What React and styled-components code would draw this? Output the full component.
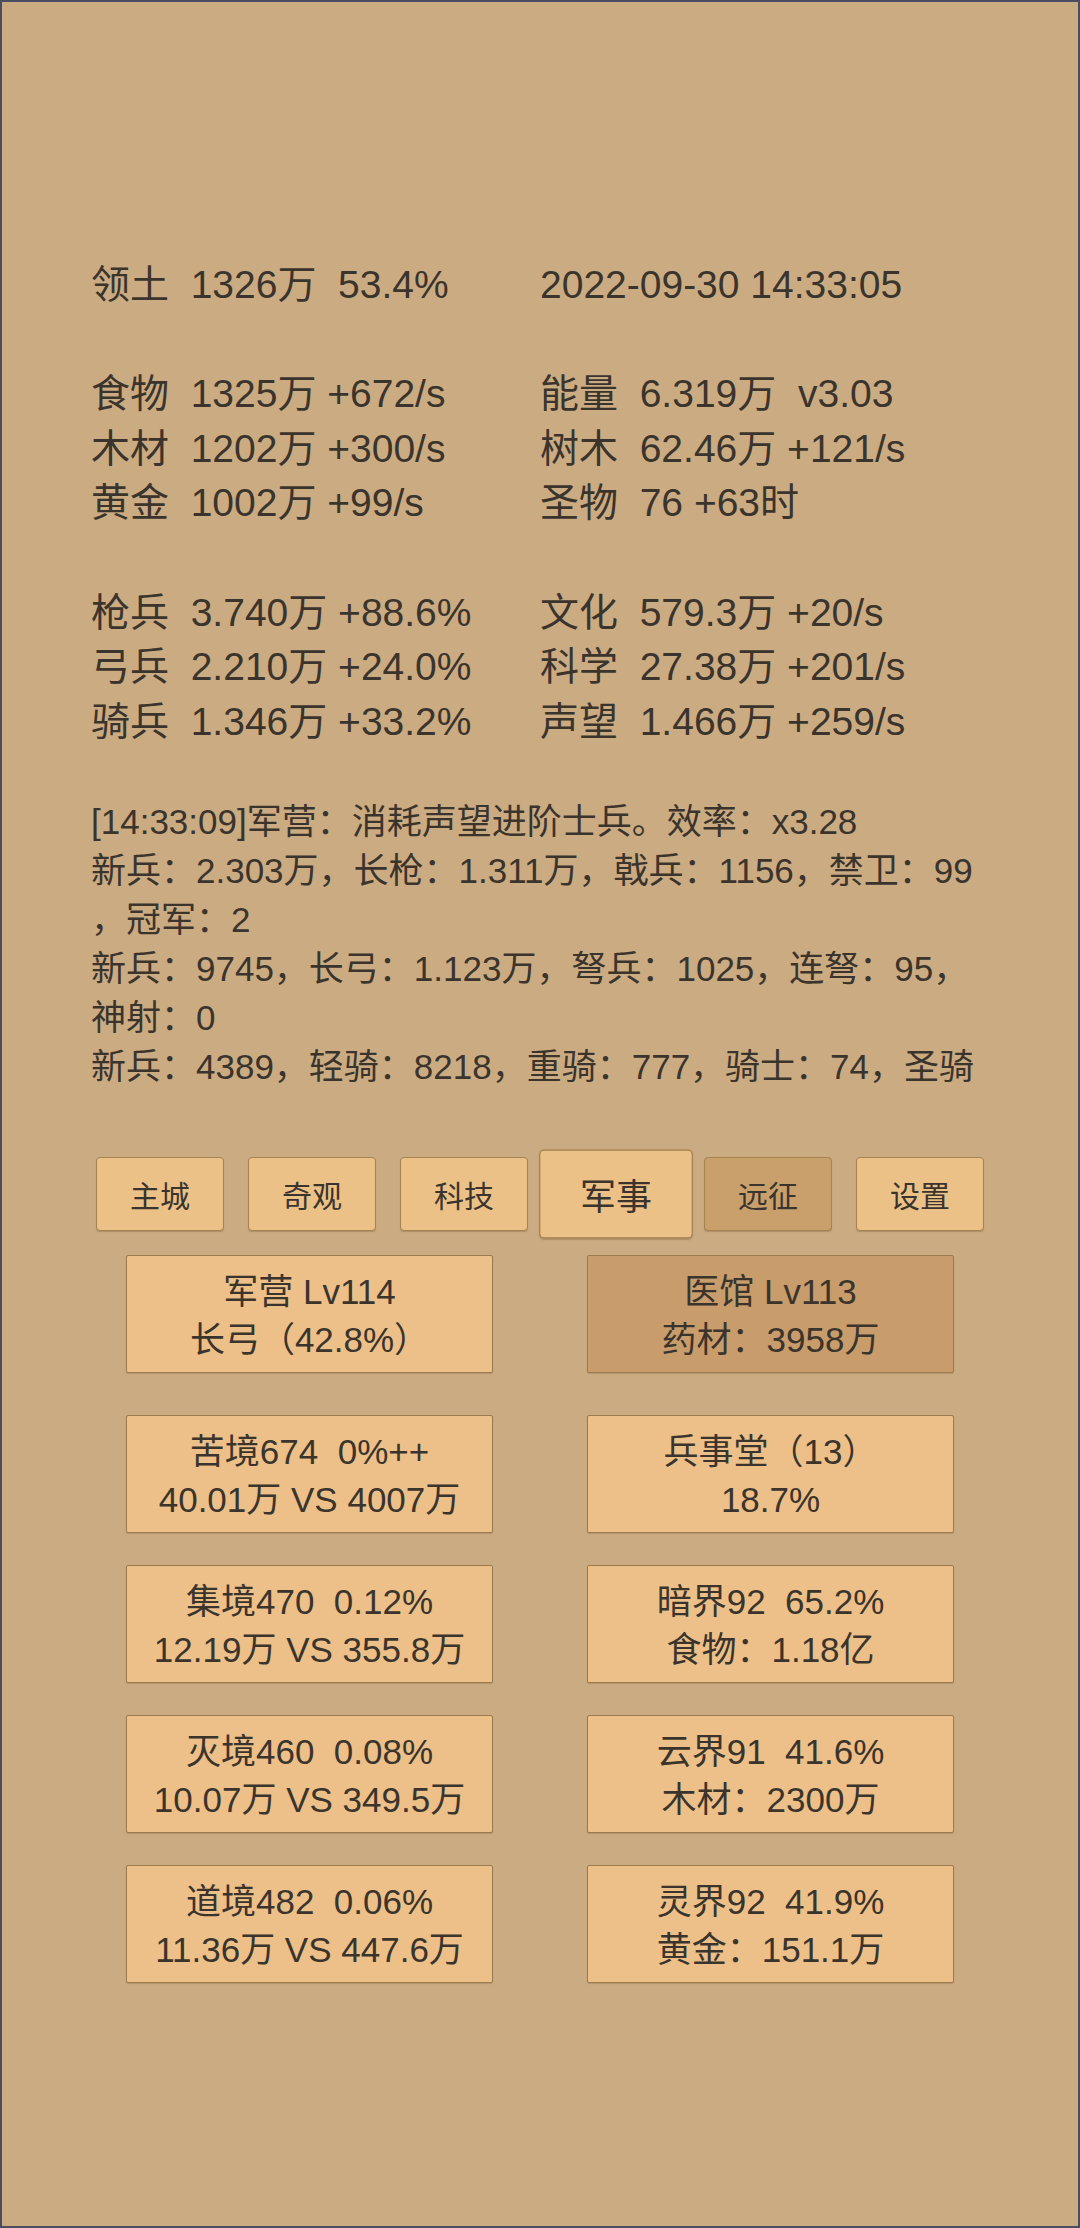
import React from "react";
import styled, { createGlobalStyle } from "styled-components";

const GlobalStyle = createGlobalStyle`
  html, body {
    margin: 0;
    padding: 0;
    background: #cbab82;
  }
  * {
    box-sizing: border-box;
  }
`;

// 画面全体
const Screen = styled.div`
  width: 1080px;
  height: 2228px;
  border: 2px solid #4a4d62;
  background: #cbab82;
  color: #3b342c;
  font-family: "Liberation Sans", "Noto Sans CJK SC", sans-serif;
  padding: 256px 89px 0;
  overflow: hidden;
`;

// 資源ステータス
const StatGroup = styled.div`
  display: grid;
  grid-template-columns: 1fr 1fr;
  margin-bottom: 54.6px;
`;

const StatCell = styled.div`
  font-size: 39px;
  line-height: 54.6px;
  white-space: pre;
`;

// ログ
const LogBox = styled.div`
  height: 294px;
  overflow: hidden;
  margin-top: -7px;
`;

const LogLine = styled.div`
  font-size: 35px;
  line-height: 49px;
  white-space: pre;
`;

// タブ
const TabBar = styled.div`
  display: flex;
  justify-content: center;
  align-items: center;
  gap: 24px;
  margin-top: 66px;
`;

const TabButton = styled.div`
  width: 128px;
  height: 74px;
  display: flex;
  align-items: center;
  justify-content: center;
  font-size: 30px;
  border: 1px solid #a5834f;
  border-radius: 4px;
  background: ${(p) => (p.$dim ? "#c9a06c" : "#ecc188")};
  transform: ${(p) => (p.$active ? "scale(1.2)" : "none")};
  box-shadow: 0 1px 1px rgba(90, 60, 30, 0.25);
`;

// 建物カード
const CardGrid = styled.div`
  display: grid;
  grid-template-columns: 367px 367px;
  justify-content: center;
  column-gap: 94px;
  row-gap: 32px;
  margin-top: ${(p) => p.$top}px;
`;

const Card = styled.div`
  height: 118px;
  padding: 12px 0 6px;
  border: 1px solid #9c7a4e;
  border-radius: 2px;
  background: ${(p) => (p.$dim ? "#c89c6b" : "#ecc088")};
  text-align: center;
  font-size: 35px;
  line-height: 48px;
  white-space: pre;
  box-shadow: 0 1px 1px rgba(90, 60, 30, 0.2);
`;

const stats = [
  [["领土  1326万  53.4%", "2022-09-30 14:33:05"]],
  [
    ["食物  1325万 +672/s", "能量  6.319万  v3.03"],
    ["木材  1202万 +300/s", "树木  62.46万 +121/s"],
    ["黄金  1002万 +99/s", "圣物  76 +63时"],
  ],
  [
    ["枪兵  3.740万 +88.6%", "文化  579.3万 +20/s"],
    ["弓兵  2.210万 +24.0%", "科学  27.38万 +201/s"],
    ["骑兵  1.346万 +33.2%", "声望  1.466万 +259/s"],
  ],
];

const logs = [
  "[14:33:09]军营：消耗声望进阶士兵。效率：x3.28",
  "新兵：2.303万，长枪：1.311万，戟兵：1156，禁卫：99",
  "，冠军：2",
  "新兵：9745，长弓：1.123万，弩兵：1025，连弩：95，",
  "神射：0",
  "新兵：4389，轻骑：8218，重骑：777，骑士：74，圣骑",
];

const tabs = [
  { name: "主城" },
  { name: "奇观" },
  { name: "科技" },
  { name: "军事", active: true },
  { name: "远征", dim: true },
  { name: "设置" },
];

const mainCards = [
  { a: "军营 Lv114", b: "长弓（42.8%）" },
  { a: "医馆 Lv113", b: "药材：3958万", dim: true },
];

const cards = [
  { a: "苦境674  0%++", b: "40.01万 VS 4007万" },
  { a: "兵事堂（13）", b: "18.7%" },
  { a: "集境470  0.12%", b: "12.19万 VS 355.8万" },
  { a: "暗界92  65.2%", b: "食物：1.18亿" },
  { a: "灭境460  0.08%", b: "10.07万 VS 349.5万" },
  { a: "云界91  41.6%", b: "木材：2300万" },
  { a: "道境482  0.06%", b: "11.36万 VS 447.6万" },
  { a: "灵界92  41.9%", b: "黄金：151.1万" },
];

export default function App() {
  return (
    <>
      <GlobalStyle />
      <Screen>
        {stats.map((group, gi) => (
          <StatGroup key={gi}>
            {group.map(([left, right], ri) => (
              <React.Fragment key={ri}>
                <StatCell>{left}</StatCell>
                <StatCell>{right}</StatCell>
              </React.Fragment>
            ))}
          </StatGroup>
        ))}

        <LogBox>
          {logs.map((line, i) => (
            <LogLine key={i}>{line}</LogLine>
          ))}
        </LogBox>

        <TabBar>
          {tabs.map((t) => (
            <TabButton key={t.name} $active={t.active} $dim={t.dim}>
              {t.name}
            </TabButton>
          ))}
        </TabBar>

        <CardGrid $top={24}>
          {mainCards.map((c) => (
            <Card key={c.a} $dim={c.dim}>
              {c.a}
              {"\n"}
              {c.b}
            </Card>
          ))}
        </CardGrid>

        <CardGrid $top={42}>
          {cards.map((c) => (
            <Card key={c.a}>
              {c.a}
              {"\n"}
              {c.b}
            </Card>
          ))}
        </CardGrid>
      </Screen>
    </>
  );
}
